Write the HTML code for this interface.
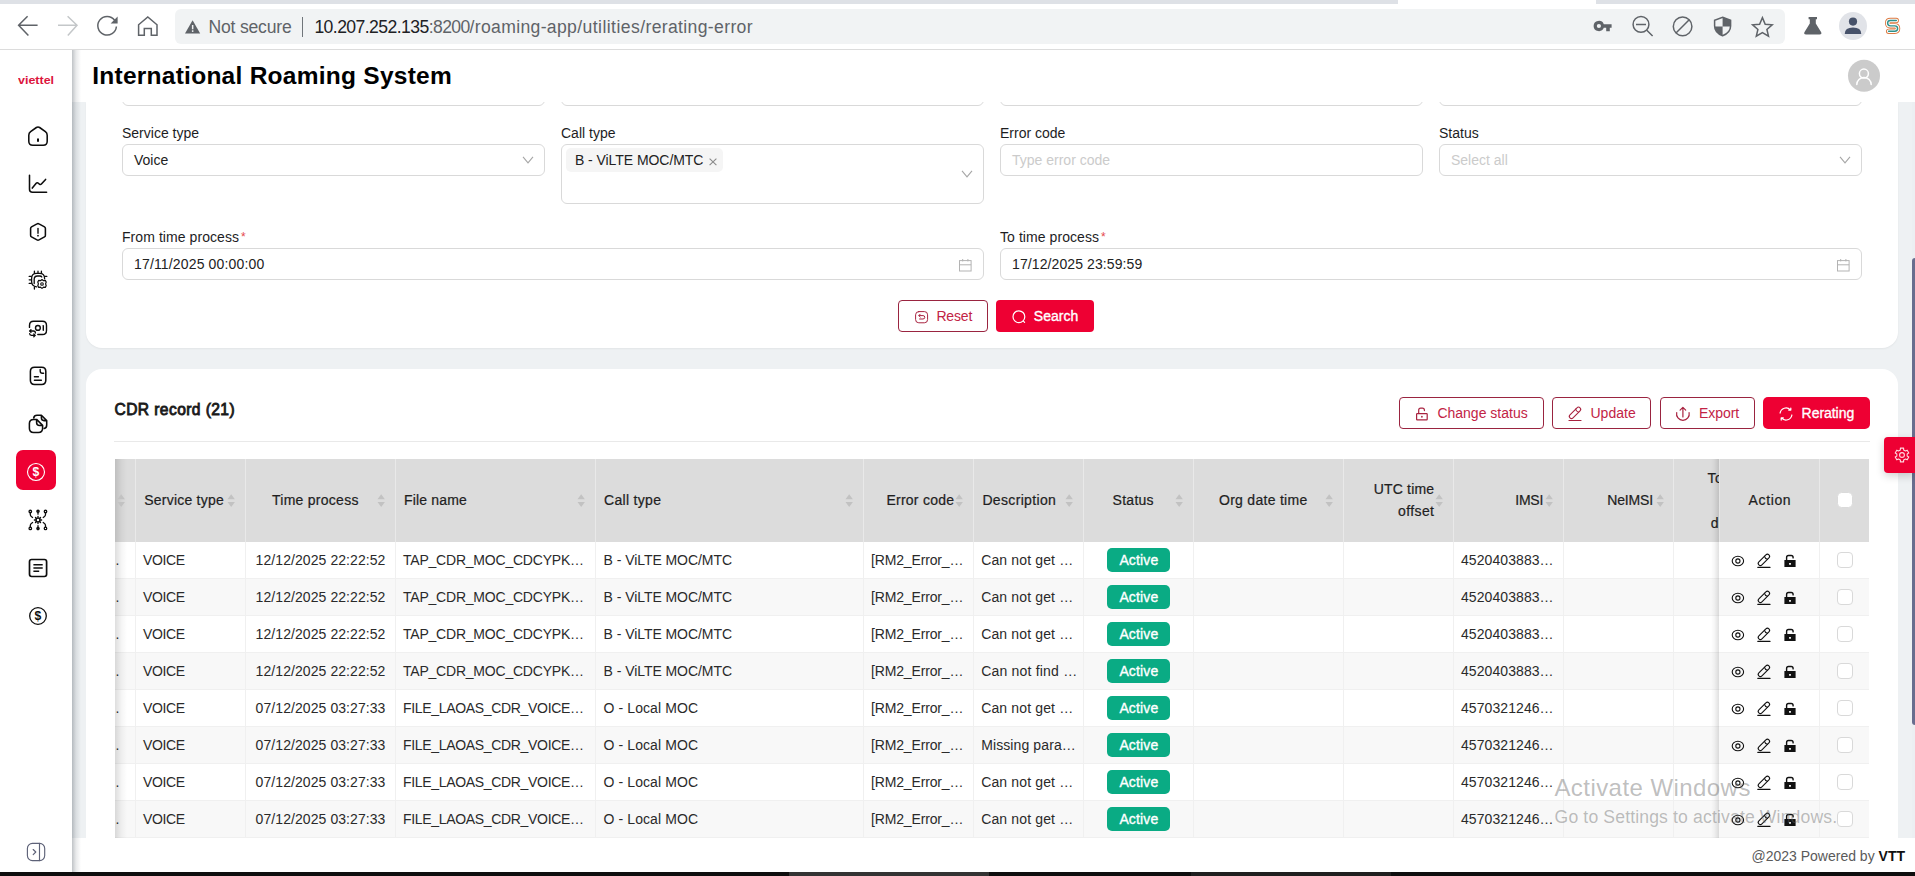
<!DOCTYPE html>
<html lang="en"><head><meta charset="utf-8"><title>International Roaming System</title>
<style>
html,body{margin:0;padding:0;}
body{width:1915px;height:876px;overflow:hidden;position:relative;background:#fff;font-family:"Liberation Sans",Arial,sans-serif;}
div,svg{box-sizing:border-box;}
svg{position:absolute;overflow:visible;}
.inp{position:absolute;border:1px solid #d9d9d9;border-radius:6px;background:#fff;}
</style></head><body>
<div style="position:absolute;left:72px;top:102px;width:1843px;height:736px;background:#eef1f3;"></div>
<div style="position:absolute;left:86px;top:102px;width:1812px;height:246px;background:#fff;border-radius:0 0 16px 16px;box-shadow:0 1px 2px rgba(0,0,0,.05);"></div>
<div style="position:absolute;left:86px;top:369px;width:1812px;height:481px;background:#fff;border-radius:16px 16px 0 0;"></div>
<div style="position:absolute;left:72px;top:838px;width:1843px;height:34px;background:#fff;"></div>
<div style="position:absolute;left:72px;top:50px;width:1843px;height:52px;background:#fff;"></div>
<div style="position:absolute;left:0px;top:50px;width:72px;height:822px;background:#fff;"></div>
<div style="position:absolute;left:72px;top:50px;width:9px;height:822px;background:linear-gradient(90deg,rgba(70,80,90,.34),rgba(70,80,90,.12) 45%,rgba(70,80,90,0));"></div>
<div style="position:absolute;left:0px;top:871.6px;width:1915px;height:4.4px;background:#0e0e0e;"></div>
<div style="position:absolute;left:789px;top:872px;width:200px;height:4px;background:#333;"></div>
<div style="position:absolute;left:1191px;top:872px;width:200px;height:4px;background:#1f1f1f;"></div>
<div style="position:absolute;left:0px;top:0px;width:1915px;height:50px;background:#fff;border-bottom:1px solid #dcdcdc;"></div>
<div style="position:absolute;left:0px;top:0px;width:1915px;height:4px;background:#dee1e6;"></div>
<div style="position:absolute;left:1398px;top:0px;width:198px;height:4px;background:#fff;"></div>
<div style="position:absolute;left:175px;top:9px;width:1610px;height:35px;background:#f1f3f4;border-radius:6px;"></div>
<div style="position:absolute;left:208.4px;top:18.80px;font-size:17.6px;line-height:17.6px;color:#5f6368;white-space:pre;letter-spacing:-0.189px;">Not secure</div>
<div style="position:absolute;left:301.5px;top:17px;width:1.2px;height:19.5px;background:#70757a;"></div>
<div style="position:absolute;left:314.4px;top:18.80px;font-size:17.6px;line-height:17.6px;color:#202124;white-space:pre;letter-spacing:-0.567px;">10.207.252.135</div>
<div style="position:absolute;left:428.8px;top:18.80px;font-size:17.6px;line-height:17.6px;color:#5f6368;white-space:pre;letter-spacing:-0.649px;">:8200</div>
<div style="position:absolute;left:469.6px;top:18.80px;font-size:17.6px;line-height:17.6px;color:#5f6368;white-space:pre;letter-spacing:0.325px;">/roaming-app</div>
<div style="position:absolute;left:577.2px;top:18.80px;font-size:17.6px;line-height:17.6px;color:#5f6368;white-space:pre;letter-spacing:0.431px;">/utilities</div>
<div style="position:absolute;left:640.2px;top:18.80px;font-size:17.6px;line-height:17.6px;color:#5f6368;white-space:pre;letter-spacing:0.348px;">/rerating-error</div>
<div style="position:absolute;left:92.2px;top:64.26px;font-size:24.5px;line-height:24.5px;color:#000;white-space:pre;font-weight:700;letter-spacing:0.259px;">International Roaming System</div>
<div style="position:absolute;right:10px;top:849.15px;font-size:14px;line-height:14px;color:#5a5a5a;white-space:pre;">@2023 Powered by <b style="color:#111">VTT</b></div>
<svg style="left:0px;top:0px;" width="170" height="50" viewBox="0 0 170 50">
<g fill="none" stroke="#5f6368" stroke-width="1.5" stroke-linecap="butt" stroke-linejoin="miter">
<path d="M37.6 25.2H19M27.6 16.3L18.6 25.2L28.4 35.6"/>
<path d="M58 25.2H76.6M67.6 16.3L77 25.2L67.8 35.6" stroke="#c4c7c9"/>
<path d="M114.6 20.2A9.3 9.3 0 1 0 116.4 26.5"/>
<path d="M138.6 35.2V24.8L147.8 16.9L157 24.8V35.2H151.3V28.6H144.3V35.2Z"/>
</g>
<path d="M117.6 16.6V23.6H110.6Z" fill="#5f6368"/>
</svg>
<svg style="left:184px;top:19px;" width="18" height="16" viewBox="0 0 18 16"><path d="M8.6 1.2L16.2 14.6H1Z" fill="#5f6368"/><rect x="7.9" y="6" width="1.5" height="4.3" fill="#f1f3f4"/><rect x="7.9" y="11.3" width="1.5" height="1.6" fill="#f1f3f4"/></svg>
<svg style="left:0px;top:0px;" width="1915" height="50" viewBox="0 0 1915 50">
<g fill="#5f6368">
<!-- key -->
<path fill-rule="evenodd" d="M1593.6 26a5.3 5.3 0 0 1 10.2 -1.8H1611.6V27.8H1609.8V31.2H1606.2V27.8H1603.8A5.3 5.3 0 0 1 1593.6 26ZM1596.8 26a2.1 2.1 0 1 0 4.2 0a2.1 2.1 0 1 0 -4.2 0Z"/>
<!-- flask -->
<path d="M1808.6 17H1817V19.2H1815.8V23.6L1821.2 32.2Q1822 34.4 1819.6 34.4H1806Q1803.6 34.4 1804.4 32.2L1809.8 23.6V19.2H1808.6Z"/>
</g>
<g fill="none" stroke="#5f6368" stroke-width="1.5">
<!-- zoom out -->
<circle cx="1641" cy="24.4" r="7.9"/><path d="M1636 24.4H1646M1646.8 30.2L1652.6 36" />
<!-- blocked -->
<circle cx="1682.6" cy="26.4" r="9.3"/><path d="M1676 33L1689.2 19.8"/>
<!-- shield -->
<path d="M1722.6 17.2L1730.6 20.2V26Q1730.6 32.6 1722.6 35.8Q1714.6 32.6 1714.6 26V20.2Z"/>
<!-- star -->
<path d="M1762.4 17.6L1765.2 24.2L1772.2 24.8L1766.9 29.4L1768.5 36.2L1762.4 32.6L1756.3 36.2L1757.9 29.4L1752.6 24.8L1759.6 24.2Z" stroke-linejoin="miter"/>
</g>
<path d="M1722.6 17.2L1730.6 20.2V26.4H1722.6ZM1722.6 26.4V35.8Q1715.2 32.8 1714.7 26.4Z" fill="#5f6368"/>
<!-- avatar -->
<circle cx="1853" cy="26" r="14" fill="#e1e3e8"/>
<circle cx="1853" cy="21.6" r="4.1" fill="#47526a"/>
<path d="M1844.8 33.4Q1844.8 27.4 1853 27.4Q1861.2 27.4 1861.2 33.4V34H1844.8Z" fill="#47526a"/>
<!-- S logo -->
<g fill="none" stroke-linecap="round" stroke-linejoin="round">
<path id="slogo" d="M1896.3 20.4H1890.4Q1887.6 20.4 1887.6 23.1Q1887.6 25.85 1890.4 25.85H1894.8Q1897.6 25.85 1897.6 28.6Q1897.6 31.3 1894.8 31.3H1888.6" stroke="#dd7a42" stroke-width="5.3"/>
<path d="M1896.3 20.4H1890.4Q1887.6 20.4 1887.6 23.1Q1887.6 25.85 1890.4 25.85H1894.8Q1897.6 25.85 1897.6 28.6Q1897.6 31.3 1894.8 31.3H1888.6" stroke="#fff" stroke-width="3.5"/>
<path d="M1896.3 20.4H1890.4Q1887.6 20.4 1887.6 23.1Q1887.6 25.85 1890.4 25.85H1894.8Q1897.6 25.85 1897.6 28.6Q1897.6 31.3 1894.8 31.3H1888.6" stroke="#2f908a" stroke-width="1.45"/>
</g>
</svg>
<div style="position:absolute;left:18px;top:74.69px;font-size:11px;line-height:11px;color:#dc143c;white-space:pre;font-weight:700;transform:scaleX(1.135);transform-origin:0 0;">viettel</div>
<div style="position:absolute;left:16px;top:450px;width:40px;height:40px;background:#ee0033;border-radius:7px;"></div>
<svg style="left:0px;top:100px;" width="72" height="776" viewBox="0 100 72 776">
<g fill="none" stroke="#0d0d0d" stroke-width="1.55" stroke-linecap="round" stroke-linejoin="round">
<!-- home -->
<path d="M36.4 127.5Q38 126.4 39.6 127.5L45.4 131.7Q47.2 133 47.2 135.2V141.2Q47.2 145.2 43.2 145.2H32.8Q28.8 145.2 28.8 141.2V135.2Q28.8 133 30.6 131.7Z"/>
<path d="M38 138.6V141.8" stroke-width="2" stroke-linecap="butt"/>
<!-- chart -->
<path d="M29.5 175.2V189.3Q29.5 192.3 32.5 192.3H46.6M32.3 188.1L36.2 183.2Q37 182.3 38 183L39.7 184.3Q40.6 184.9 41.4 184L45.6 179.4"/>
<!-- hex alert -->
<path d="M37 223.9Q38 223.3 39 223.9L44.5 226.9Q45.4 227.4 45.4 228.6V235.2Q45.4 236.4 44.5 236.9L39 239.9Q38 240.5 37 239.9L31.5 236.9Q30.6 236.4 30.6 235.2V228.6Q30.6 227.4 31.5 226.9Z"/>
<path d="M38 228.4V233.3" stroke-width="1.4"/><path d="M38 235.6V235.7" stroke-width="1.7"/>
<!-- doc -->
<path d="M34.6 367.3H41.6Q45.8 367.3 45.8 371.5V380.2Q45.8 384.4 41.6 384.4H34.6Q30.4 384.4 30.4 380.2V371.5Q30.4 367.3 34.6 367.3Z"/>
<path d="M40.2 369.4V371Q40.2 373.2 42.4 373.2H43.6M34.4 376.7H38.4M34.4 380.2H41.4" stroke-width="1.4"/>
<!-- stickers -->
<path d="M36.6 419.4H33.6Q29.4 419.4 29.4 423.6V428.2Q29.4 432.4 33.6 432.4H38.4Q42.6 432.4 42.6 428.2V425.4ZM36.6 419.4V422.4Q36.6 425.4 39.6 425.4H42.6"/>
<path d="M33.7 418Q34.2 415.3 37 415.3H41.4L46.7 420.6V425Q46.7 428 44.2 428.5M41.4 415.3V417.8Q41.4 420.6 44 420.6H46.7"/>
<!-- list -->
<rect x="29.5" y="559.5" width="17.1" height="17" rx="2.2" stroke-width="1.7"/>
<path d="M33.4 564.7H42.7M33.4 568H42.7M33.4 571.3H39.2" stroke-width="1.6" stroke-linecap="butt"/>
<!-- dollar -->
<circle cx="38" cy="616" r="8.3" stroke-width="1.3"/>
</g>
<!-- cpu setting -->
<g fill="none" stroke="#0d0d0d" stroke-width="1.3" stroke-linecap="round" stroke-linejoin="round">
<path d="M36.6 286.9Q31.6 286.2 31.6 281.6V278.4Q31.6 273.4 36.6 273.4H39.6Q44.6 273.4 44.6 278.4V278.8"/>
<path d="M34.2 283.6V279.2Q34.2 276 37.4 276H39.6Q41.4 276 41.8 277"/>
<path d="M34.4 271.2V273M38 271.2V273M41.4 271.2V273M29.2 276.4H31.2M29.2 279.8H31.2M29.2 283.4H31.2M45 276.4H46.8M34.4 287.2V289"/>
<path d="M42 279.6L43.5 280.7L45.3 280.4L46.2 282L45.6 283.9L46.2 285.8L45.3 287.4L43.5 287.2L42 288.4L40.5 287.2L38.7 287.4L37.8 285.8L38.4 283.9L37.8 282L38.7 280.4L40.5 280.7Z" stroke-width="1.2"/>
<circle cx="42" cy="284" r="1.3" stroke-width="1.1"/>
</g>
<!-- money change -->
<g fill="none" stroke="#0d0d0d" stroke-width="1.4" stroke-linecap="round" stroke-linejoin="round">
<path d="M29.5 327.4V325.4Q29.5 321.3 33.6 321.3H42.4Q46.5 321.3 46.5 325.4V330.4Q46.5 334.5 42.4 334.5H37.8"/>
<circle cx="37.9" cy="327.9" r="2.4"/>
<path d="M43.3 325.6V330.2"/>
<path d="M29.6 331H33.4Q35.4 331 35.4 333M31 329.6L29.6 331L31 332.4M35.2 335.4H31.4Q29.6 335.4 29.6 333.6M33.8 334L35.2 335.4L33.8 336.8" stroke-width="1.3"/>
</g>
<!-- network gear -->
<g fill="none" stroke="#0d0d0d" stroke-width="1.3" stroke-linecap="round" stroke-linejoin="round">
<circle cx="30.3" cy="511.5" r="1.25"/><circle cx="45.5" cy="511.5" r="1.25"/><circle cx="30.3" cy="528.4" r="1.25"/><circle cx="45.5" cy="528.4" r="1.25"/>
<circle cx="38" cy="511.2" r="1" stroke-width="1.6"/><circle cx="38" cy="528.6" r="1" stroke-width="1.6"/>
<path d="M30.3 513V514.6Q30.3 516 31.6 516.8L32.6 517.5M45.5 513V514.6Q45.5 516 44.2 516.8L43.2 517.5M30.3 526.9V525.4Q30.3 524 31.6 523.2L32.6 522.5M45.5 526.9V525.4Q45.5 524 44.2 523.2L43.2 522.5M38 512.6V514.2M38 527.2V525.6"/>
<circle cx="38" cy="520" r="2" stroke-width="1.6"/>
<path d="M38 516.4V517M38 523V523.6M34.4 520H35M41 520H41.6M35.5 517.5L35.9 517.9M40.1 522.1L40.5 522.5M35.5 522.5L35.9 522.1M40.1 517.9L40.5 517.5" stroke-width="1.4"/>
</g>
<!-- active dollar -->
<circle cx="36" cy="472" r="8.5" fill="none" stroke="#fff" stroke-width="1.1"/>
<text x="36" y="476.4" font-family="Liberation Sans, Arial, sans-serif" font-weight="700" font-size="12.2" fill="#fff" text-anchor="middle">$</text>
<text x="38" y="620.4" font-family="Liberation Sans, Arial, sans-serif" font-weight="700" font-size="12.2" fill="#0d0d0d" text-anchor="middle">$</text>
<!-- collapse -->
<g fill="none" stroke="#5e6278" stroke-width="1.15" stroke-linecap="round" stroke-linejoin="round">
<rect x="27.4" y="843.4" width="17.3" height="17.2" rx="5"/>
<path d="M39.5 843.4V860.6M33.2 849.5L35.8 852L33.2 854.6"/>
</g>
</svg>
<div style="position:absolute;left:122px;top:102px;width:423px;height:4px;overflow:hidden"><div class="inp" style="left:0;top:-28px;width:423px;height:32px"></div></div>
<div style="position:absolute;left:561px;top:102px;width:423px;height:4px;overflow:hidden"><div class="inp" style="left:0;top:-28px;width:423px;height:32px"></div></div>
<div style="position:absolute;left:1000px;top:102px;width:423px;height:4px;overflow:hidden"><div class="inp" style="left:0;top:-28px;width:423px;height:32px"></div></div>
<div style="position:absolute;left:1439px;top:102px;width:423px;height:4px;overflow:hidden"><div class="inp" style="left:0;top:-28px;width:423px;height:32px"></div></div>
<div style="position:absolute;left:122px;top:125.75px;font-size:14px;line-height:14px;color:#1d1d1f;white-space:pre;">Service type</div>
<div style="position:absolute;left:561px;top:125.75px;font-size:14px;line-height:14px;color:#1d1d1f;white-space:pre;">Call type</div>
<div style="position:absolute;left:1000px;top:125.75px;font-size:14px;line-height:14px;color:#1d1d1f;white-space:pre;">Error code</div>
<div style="position:absolute;left:1439px;top:125.75px;font-size:14px;line-height:14px;color:#1d1d1f;white-space:pre;">Status</div>
<div class="inp" style="left:122px;top:144px;width:423px;height:32px"></div>
<div class="inp" style="left:561px;top:144px;width:423px;height:60px"></div>
<div class="inp" style="left:1000px;top:144px;width:423px;height:32px"></div>
<div class="inp" style="left:1439px;top:144px;width:423px;height:32px"></div>
<div style="position:absolute;left:134px;top:152.95px;font-size:14px;line-height:14px;color:#222;white-space:pre;">Voice</div>
<div style="position:absolute;left:1012px;top:152.95px;font-size:14px;line-height:14px;color:#cbcbcb;white-space:pre;">Type error code</div>
<div style="position:absolute;left:1451px;top:152.95px;font-size:14px;line-height:14px;color:#cbcbcb;white-space:pre;">Select all</div>
<svg style="left:522px;top:155.6px;" width="12" height="8" viewBox="0 0 12 8"><path d="M1 0.8L6 6.8L11 0.8" fill="none" stroke="#a6a6a6" stroke-width="1.1"/></svg>
<svg style="left:961px;top:169.6px;" width="12" height="8" viewBox="0 0 12 8"><path d="M1 0.8L6 6.8L11 0.8" fill="none" stroke="#a6a6a6" stroke-width="1.1"/></svg>
<svg style="left:1839px;top:155.6px;" width="12" height="8" viewBox="0 0 12 8"><path d="M1 0.8L6 6.8L11 0.8" fill="none" stroke="#a6a6a6" stroke-width="1.1"/></svg>
<div style="position:absolute;left:566px;top:148px;width:157px;height:24px;background:#f5f5f5;border-radius:5px;"></div>
<div style="position:absolute;left:575px;top:152.65px;font-size:14px;line-height:14px;color:#222;white-space:pre;letter-spacing:-0.06px;">B - ViLTE MOC/MTC</div>
<svg style="left:709px;top:157.6px;" width="8" height="8" viewBox="0 0 8 8"><path d="M0.6 0.6L7.4 7.2M7.4 0.6L0.6 7.2" fill="none" stroke="#8a8a8a" stroke-width="1.1"/></svg>
<div style="position:absolute;left:122px;top:229.85px;font-size:14px;line-height:14px;color:#1d1d1f;white-space:pre;letter-spacing:0.07px;">From time process<span style="color:#e5484d;font-size:12px;position:relative;top:-1px;left:2px">*</span></div>
<div style="position:absolute;left:1000px;top:229.85px;font-size:14px;line-height:14px;color:#1d1d1f;white-space:pre;letter-spacing:0.07px;">To time process<span style="color:#e5484d;font-size:12px;position:relative;top:-1px;left:2px">*</span></div>
<div class="inp" style="left:122px;top:248px;width:862px;height:32px"></div>
<div class="inp" style="left:1000px;top:248px;width:862px;height:32px"></div>
<div style="position:absolute;left:134px;top:256.95px;font-size:14px;line-height:14px;color:#222;white-space:pre;letter-spacing:0.155px;">17/11/2025 00:00:00</div>
<div style="position:absolute;left:1012px;top:256.95px;font-size:14px;line-height:14px;color:#222;white-space:pre;letter-spacing:0.097px;">17/12/2025 23:59:59</div>
<svg style="left:958.6px;top:258.9px;" width="13" height="13" viewBox="0 0 13 13"><g fill="none" stroke="#b3b3b3" stroke-width="1"><rect x="0.5" y="1.6" width="11.6" height="10.4"/><path d="M0.5 5.8H12.1M3.7 0V2.4M8.9 0V2.4"/></g></svg>
<svg style="left:1836.6px;top:258.9px;" width="13" height="13" viewBox="0 0 13 13"><g fill="none" stroke="#b3b3b3" stroke-width="1"><rect x="0.5" y="1.6" width="11.6" height="10.4"/><path d="M0.5 5.8H12.1M3.7 0V2.4M8.9 0V2.4"/></g></svg>
<div style="position:absolute;left:898px;top:300px;width:90px;height:32px;border:1px solid #9a2440;border-radius:4px;background:#fff;"></div>
<svg style="left:914.6px;top:310.6px;" width="13.2" height="12.4" viewBox="0 0 13.2 12.4"><g fill="none" stroke="#a8223f" stroke-width="1" stroke-linecap="round" stroke-linejoin="round"><rect x="0.6" y="0.6" width="12" height="11.2" rx="3.2"/><path d="M4 4.6H8Q9.8 4.6 9.8 6.3Q9.8 8 8 8H4.6M5.2 3.2L3.8 4.6L5.2 6"/></g></svg>
<div style="position:absolute;left:936.4px;top:308.85px;font-size:14px;line-height:14px;color:#c22345;white-space:pre;letter-spacing:-0.143px;">Reset</div>
<div style="position:absolute;left:996px;top:300px;width:98px;height:32px;background:#ee0033;border-radius:4px;"></div>
<svg style="left:1012px;top:309.6px;" width="14" height="14" viewBox="0 0 14 14"><g fill="none" stroke="#fff" stroke-width="1.2" stroke-linecap="round"><circle cx="6.9" cy="6.7" r="5.9"/><path d="M11.4 11.2L12.6 12.4"/></g></svg>
<div style="position:absolute;left:1033.8px;top:308.85px;font-size:14px;line-height:14px;color:#fff;white-space:pre;letter-spacing:0.008px;-webkit-text-stroke:0.35px #fff;">Search</div>
<div style="position:absolute;left:114.5px;top:401.99px;font-size:15.6px;line-height:15.6px;color:#1a1a1a;white-space:pre;letter-spacing:0.412px;-webkit-text-stroke:0.85px #1a1a1a;">CDR record (21)</div>
<div style="position:absolute;left:114px;top:441px;width:1756px;height:1px;background:#e9e9e9;"></div>
<div style="position:absolute;left:1399px;top:397px;width:145px;height:32px;border:1px solid #9a2440;border-radius:4px;background:#fff;"></div>
<div style="position:absolute;left:1552px;top:397px;width:99px;height:32px;border:1px solid #9a2440;border-radius:4px;background:#fff;"></div>
<div style="position:absolute;left:1660px;top:397px;width:95px;height:32px;border:1px solid #9a2440;border-radius:4px;background:#fff;"></div>
<div style="position:absolute;left:1763px;top:397px;width:107px;height:32px;background:#ee0033;border-radius:5px;"></div>
<div style="position:absolute;left:1437.4px;top:405.95px;font-size:14px;line-height:14px;color:#c22345;white-space:pre;letter-spacing:0.001px;">Change status</div>
<div style="position:absolute;left:1590.4px;top:405.95px;font-size:14px;line-height:14px;color:#c22345;white-space:pre;letter-spacing:0.051px;">Update</div>
<div style="position:absolute;left:1699px;top:405.95px;font-size:14px;line-height:14px;color:#c22345;white-space:pre;letter-spacing:-0.052px;">Export</div>
<div style="position:absolute;left:1801.6px;top:405.95px;font-size:14px;line-height:14px;color:#fff;white-space:pre;letter-spacing:-0.045px;-webkit-text-stroke:0.35px #fff;">Rerating</div>
<svg style="left:1380px;top:397px;" width="500" height="32" viewBox="1380 397 500 32">
<g fill="none" stroke="#a8223f" stroke-width="1.2" stroke-linecap="round" stroke-linejoin="round">
<!-- unlock -->
<rect x="1416.6" y="413.7" width="10.6" height="6.1" rx="0.6"/>
<path d="M1418.7 413.4V410.2Q1418.7 408.2 1420.7 408.2H1422.4Q1424.4 408.2 1424.4 410.2V410.6"/>
<path d="M1421.9 416.6V416.9" stroke-width="1.6"/>
<!-- pencil -->
<path d="M1569 420.5H1581"/>
<g transform="translate(1575 412.8) rotate(-45)" stroke-width="1.1"><rect x="-7.1" y="-2.15" width="14.2" height="4.3" rx="2.15"/><path d="M3 -2.15Q1.7 0 3 2.15"/></g>
<!-- export -->
<path d="M1676.7 412.6A6.35 6.35 0 1 0 1689.1 412.6M1682.9 417V407.6M1680.1 410.2L1682.9 407.4L1685.7 410.2"/>
</g>
<g fill="none" stroke="#fff" stroke-width="1.25" stroke-linecap="round" stroke-linejoin="round">
<path d="M1780.1 413A6 6 0 0 1 1790.4 409.9M1791.9 415A6 6 0 0 1 1781.6 418.1M1790.8 408V410.1H1788.7M1781.2 420V417.9H1783.3"/>
</g>
</svg>
<div style="position:absolute;left:115px;top:458px;width:1754px;height:380px;overflow:hidden">
<div style="position:absolute;left:0px;top:0.8px;width:1754px;height:83.2px;background:#dcdcdc;"></div>
<div style="position:absolute;left:0px;top:84px;width:1754px;height:37px;background:#fff;border-bottom:1px solid #f0f0f0;"></div>
<div style="position:absolute;left:0px;top:121px;width:1754px;height:37px;background:#f8f8f8;border-bottom:1px solid #f0f0f0;"></div>
<div style="position:absolute;left:0px;top:158px;width:1754px;height:37px;background:#fff;border-bottom:1px solid #f0f0f0;"></div>
<div style="position:absolute;left:0px;top:195px;width:1754px;height:37px;background:#f8f8f8;border-bottom:1px solid #f0f0f0;"></div>
<div style="position:absolute;left:0px;top:232px;width:1754px;height:37px;background:#fff;border-bottom:1px solid #f0f0f0;"></div>
<div style="position:absolute;left:0px;top:269px;width:1754px;height:37px;background:#f8f8f8;border-bottom:1px solid #f0f0f0;"></div>
<div style="position:absolute;left:0px;top:306px;width:1754px;height:37px;background:#fff;border-bottom:1px solid #f0f0f0;"></div>
<div style="position:absolute;left:0px;top:343px;width:1754px;height:37px;background:#f8f8f8;border-bottom:1px solid #f0f0f0;"></div>
<div style="position:absolute;left:20px;top:0.8px;width:1px;height:83.2px;background:#e9e9e9;"></div>
<div style="position:absolute;left:20px;top:84px;width:1px;height:296px;background:#f0f0f0;"></div>
<div style="position:absolute;left:130px;top:0.8px;width:1px;height:83.2px;background:#e9e9e9;"></div>
<div style="position:absolute;left:130px;top:84px;width:1px;height:296px;background:#f0f0f0;"></div>
<div style="position:absolute;left:280px;top:0.8px;width:1px;height:83.2px;background:#e9e9e9;"></div>
<div style="position:absolute;left:280px;top:84px;width:1px;height:296px;background:#f0f0f0;"></div>
<div style="position:absolute;left:480px;top:0.8px;width:1px;height:83.2px;background:#e9e9e9;"></div>
<div style="position:absolute;left:480px;top:84px;width:1px;height:296px;background:#f0f0f0;"></div>
<div style="position:absolute;left:748px;top:0.8px;width:1px;height:83.2px;background:#e9e9e9;"></div>
<div style="position:absolute;left:748px;top:84px;width:1px;height:296px;background:#f0f0f0;"></div>
<div style="position:absolute;left:858px;top:0.8px;width:1px;height:83.2px;background:#e9e9e9;"></div>
<div style="position:absolute;left:858px;top:84px;width:1px;height:296px;background:#f0f0f0;"></div>
<div style="position:absolute;left:968px;top:0.8px;width:1px;height:83.2px;background:#e9e9e9;"></div>
<div style="position:absolute;left:968px;top:84px;width:1px;height:296px;background:#f0f0f0;"></div>
<div style="position:absolute;left:1078px;top:0.8px;width:1px;height:83.2px;background:#e9e9e9;"></div>
<div style="position:absolute;left:1078px;top:84px;width:1px;height:296px;background:#f0f0f0;"></div>
<div style="position:absolute;left:1228px;top:0.8px;width:1px;height:83.2px;background:#e9e9e9;"></div>
<div style="position:absolute;left:1228px;top:84px;width:1px;height:296px;background:#f0f0f0;"></div>
<div style="position:absolute;left:1338px;top:0.8px;width:1px;height:83.2px;background:#e9e9e9;"></div>
<div style="position:absolute;left:1338px;top:84px;width:1px;height:296px;background:#f0f0f0;"></div>
<div style="position:absolute;left:1448px;top:0.8px;width:1px;height:83.2px;background:#e9e9e9;"></div>
<div style="position:absolute;left:1448px;top:84px;width:1px;height:296px;background:#f0f0f0;"></div>
<div style="position:absolute;left:1558px;top:0.8px;width:1px;height:83.2px;background:#e9e9e9;"></div>
<div style="position:absolute;left:1558px;top:84px;width:1px;height:296px;background:#f0f0f0;"></div>
<div style="position:absolute;left:1668px;top:0.8px;width:1px;height:83.2px;background:#e9e9e9;"></div>
<div style="position:absolute;left:1668px;top:84px;width:1px;height:296px;background:#f0f0f0;"></div>
<div style="position:absolute;left:1704px;top:0.8px;width:1px;height:83.2px;background:#e9e9e9;"></div>
<div style="position:absolute;left:1704px;top:84px;width:1px;height:296px;background:#f0f0f0;"></div>
<div style="position:absolute;left:0px;top:0.8px;width:12px;height:379.2px;background:linear-gradient(90deg,rgba(0,0,0,.13),rgba(0,0,0,.04) 55%,rgba(0,0,0,0));"></div>
<svg style="left:2.0000000000000027px;top:35.59999999999999px;" width="8.4" height="13.2" viewBox="0 0 8.4 13.2"><path d="M4.2 0.3L7.9 5.2H0.5Z M4.2 12.9L7.9 8H0.5Z" fill="#c2c2c2"/></svg>
<div style="position:absolute;left:29.30000000000001px;top:34.95px;font-size:14px;line-height:14px;color:#1f1f1f;white-space:pre;letter-spacing:0.215px;-webkit-text-stroke:0.22px #1f1f1f;">Service type</div>
<svg style="left:112.2px;top:35.59999999999999px;" width="8.4" height="13.2" viewBox="0 0 8.4 13.2"><path d="M4.2 0.3L7.9 5.2H0.5Z M4.2 12.9L7.9 8H0.5Z" fill="#c2c2c2"/></svg>
<div style="position:absolute;left:157px;top:34.95px;font-size:14px;line-height:14px;color:#1f1f1f;white-space:pre;letter-spacing:0.264px;-webkit-text-stroke:0.22px #1f1f1f;">Time process</div>
<svg style="left:262.2px;top:35.59999999999999px;" width="8.4" height="13.2" viewBox="0 0 8.4 13.2"><path d="M4.2 0.3L7.9 5.2H0.5Z M4.2 12.9L7.9 8H0.5Z" fill="#c2c2c2"/></svg>
<div style="position:absolute;left:289px;top:34.95px;font-size:14px;line-height:14px;color:#1f1f1f;white-space:pre;letter-spacing:0.166px;-webkit-text-stroke:0.22px #1f1f1f;">File name</div>
<svg style="left:462.09999999999997px;top:35.59999999999999px;" width="8.4" height="13.2" viewBox="0 0 8.4 13.2"><path d="M4.2 0.3L7.9 5.2H0.5Z M4.2 12.9L7.9 8H0.5Z" fill="#c2c2c2"/></svg>
<div style="position:absolute;left:489px;top:34.95px;font-size:14px;line-height:14px;color:#1f1f1f;white-space:pre;letter-spacing:0.316px;-webkit-text-stroke:0.22px #1f1f1f;">Call type</div>
<svg style="left:730.0999999999999px;top:35.59999999999999px;" width="8.4" height="13.2" viewBox="0 0 8.4 13.2"><path d="M4.2 0.3L7.9 5.2H0.5Z M4.2 12.9L7.9 8H0.5Z" fill="#c2c2c2"/></svg>
<div style="position:absolute;left:771.4px;top:34.95px;font-size:14px;line-height:14px;color:#1f1f1f;white-space:pre;letter-spacing:0.249px;-webkit-text-stroke:0.22px #1f1f1f;">Error code</div>
<svg style="left:840.4px;top:35.59999999999999px;" width="8.4" height="13.2" viewBox="0 0 8.4 13.2"><path d="M4.2 0.3L7.9 5.2H0.5Z M4.2 12.9L7.9 8H0.5Z" fill="#c2c2c2"/></svg>
<div style="position:absolute;left:867.4px;top:34.95px;font-size:14px;line-height:14px;color:#1f1f1f;white-space:pre;letter-spacing:0.337px;-webkit-text-stroke:0.22px #1f1f1f;">Description</div>
<svg style="left:950.0999999999999px;top:35.59999999999999px;" width="8.4" height="13.2" viewBox="0 0 8.4 13.2"><path d="M4.2 0.3L7.9 5.2H0.5Z M4.2 12.9L7.9 8H0.5Z" fill="#c2c2c2"/></svg>
<div style="position:absolute;left:997.5999999999999px;top:34.95px;font-size:14px;line-height:14px;color:#1f1f1f;white-space:pre;letter-spacing:0.262px;-webkit-text-stroke:0.22px #1f1f1f;">Status</div>
<svg style="left:1060.0px;top:35.59999999999999px;" width="8.4" height="13.2" viewBox="0 0 8.4 13.2"><path d="M4.2 0.3L7.9 5.2H0.5Z M4.2 12.9L7.9 8H0.5Z" fill="#c2c2c2"/></svg>
<div style="position:absolute;left:1104px;top:34.95px;font-size:14px;line-height:14px;color:#1f1f1f;white-space:pre;letter-spacing:0.282px;-webkit-text-stroke:0.22px #1f1f1f;">Org date time</div>
<svg style="left:1210.1px;top:35.59999999999999px;" width="8.4" height="13.2" viewBox="0 0 8.4 13.2"><path d="M4.2 0.3L7.9 5.2H0.5Z M4.2 12.9L7.9 8H0.5Z" fill="#c2c2c2"/></svg>
<div style="position:absolute;left:1258.8px;top:24.15px;font-size:14px;line-height:14px;color:#1f1f1f;white-space:pre;letter-spacing:0.156px;-webkit-text-stroke:0.22px #1f1f1f;">UTC time</div>
<div style="position:absolute;left:1283px;top:46.25px;font-size:14px;line-height:14px;color:#1f1f1f;white-space:pre;letter-spacing:0.402px;-webkit-text-stroke:0.22px #1f1f1f;">offset</div>
<svg style="left:1319.8px;top:35.59999999999999px;" width="8.4" height="13.2" viewBox="0 0 8.4 13.2"><path d="M4.2 0.3L7.9 5.2H0.5Z M4.2 12.9L7.9 8H0.5Z" fill="#c2c2c2"/></svg>
<div style="position:absolute;left:1400.2px;top:35.35px;font-size:14px;line-height:14px;color:#1f1f1f;white-space:pre;letter-spacing:-0.193px;-webkit-text-stroke:0.22px #1f1f1f;">IMSI</div>
<svg style="left:1430.3px;top:35.59999999999999px;" width="8.4" height="13.2" viewBox="0 0 8.4 13.2"><path d="M4.2 0.3L7.9 5.2H0.5Z M4.2 12.9L7.9 8H0.5Z" fill="#c2c2c2"/></svg>
<div style="position:absolute;left:1492.2px;top:35.35px;font-size:14px;line-height:14px;color:#1f1f1f;white-space:pre;letter-spacing:-0.135px;-webkit-text-stroke:0.22px #1f1f1f;">NeIMSI</div>
<svg style="left:1540.5px;top:35.59999999999999px;" width="8.4" height="13.2" viewBox="0 0 8.4 13.2"><path d="M4.2 0.3L7.9 5.2H0.5Z M4.2 12.9L7.9 8H0.5Z" fill="#c2c2c2"/></svg>
<div style="position:absolute;left:1592.4px;top:12.95px;font-size:14px;line-height:14px;color:#1f1f1f;white-space:pre;letter-spacing:0.615px;-webkit-text-stroke:0.22px #1f1f1f;">Total call</div>
<div style="position:absolute;left:1615px;top:35.35px;font-size:14px;line-height:14px;color:#1f1f1f;white-space:pre;letter-spacing:0.688px;-webkit-text-stroke:0.22px #1f1f1f;">event</div>
<div style="position:absolute;left:1595.8px;top:57.55px;font-size:14px;line-height:14px;color:#1f1f1f;white-space:pre;letter-spacing:0.487px;-webkit-text-stroke:0.22px #1f1f1f;">duration</div>
<div style="position:absolute;left:0.4000000000000057px;top:94.85px;font-size:14px;line-height:14px;color:#2a2a2a;white-space:pre;">.</div>
<div style="position:absolute;left:28px;top:94.85px;font-size:14px;line-height:14px;color:#2a2a2a;white-space:pre;letter-spacing:-0.391px;">VOICE</div>
<div style="position:absolute;left:140.6px;top:94.85px;font-size:14px;line-height:14px;color:#2a2a2a;white-space:pre;letter-spacing:0.075px;">12/12/2025 22:22:52</div>
<div style="position:absolute;left:288px;top:94.85px;font-size:14px;line-height:14px;color:#2a2a2a;white-space:pre;letter-spacing:-0.216px;">TAP_CDR_MOC_CDCYPK…</div>
<div style="position:absolute;left:488.6px;top:94.85px;font-size:14px;line-height:14px;color:#2a2a2a;white-space:pre;letter-spacing:-0.061px;">B - ViLTE MOC/MTC</div>
<div style="position:absolute;left:756px;top:94.85px;font-size:14px;line-height:14px;color:#2a2a2a;white-space:pre;letter-spacing:-0.157px;">[RM2_Error_…</div>
<div style="position:absolute;left:866.2px;top:94.85px;font-size:14px;line-height:14px;color:#2a2a2a;white-space:pre;letter-spacing:0.144px;">Can not get …</div>
<div style="position:absolute;left:992px;top:90px;width:63px;height:24px;background:#0aab84;border-radius:5px;"></div>
<div style="position:absolute;left:1004.4000000000001px;top:95.15px;font-size:14px;line-height:14px;color:#fff;white-space:pre;letter-spacing:0.135px;-webkit-text-stroke:0.35px #fff;">Active</div>
<div style="position:absolute;left:1346px;top:94.85px;font-size:14px;line-height:14px;color:#2a2a2a;white-space:pre;letter-spacing:0.074px;">4520403883…</div>
<div style="position:absolute;left:0.4000000000000057px;top:131.85px;font-size:14px;line-height:14px;color:#2a2a2a;white-space:pre;">.</div>
<div style="position:absolute;left:28px;top:131.85px;font-size:14px;line-height:14px;color:#2a2a2a;white-space:pre;letter-spacing:-0.391px;">VOICE</div>
<div style="position:absolute;left:140.6px;top:131.85px;font-size:14px;line-height:14px;color:#2a2a2a;white-space:pre;letter-spacing:0.075px;">12/12/2025 22:22:52</div>
<div style="position:absolute;left:288px;top:131.85px;font-size:14px;line-height:14px;color:#2a2a2a;white-space:pre;letter-spacing:-0.216px;">TAP_CDR_MOC_CDCYPK…</div>
<div style="position:absolute;left:488.6px;top:131.85px;font-size:14px;line-height:14px;color:#2a2a2a;white-space:pre;letter-spacing:-0.061px;">B - ViLTE MOC/MTC</div>
<div style="position:absolute;left:756px;top:131.85px;font-size:14px;line-height:14px;color:#2a2a2a;white-space:pre;letter-spacing:-0.157px;">[RM2_Error_…</div>
<div style="position:absolute;left:866.2px;top:131.85px;font-size:14px;line-height:14px;color:#2a2a2a;white-space:pre;letter-spacing:0.144px;">Can not get …</div>
<div style="position:absolute;left:992px;top:127px;width:63px;height:24px;background:#0aab84;border-radius:5px;"></div>
<div style="position:absolute;left:1004.4000000000001px;top:132.15px;font-size:14px;line-height:14px;color:#fff;white-space:pre;letter-spacing:0.135px;-webkit-text-stroke:0.35px #fff;">Active</div>
<div style="position:absolute;left:1346px;top:131.85px;font-size:14px;line-height:14px;color:#2a2a2a;white-space:pre;letter-spacing:0.074px;">4520403883…</div>
<div style="position:absolute;left:0.4000000000000057px;top:168.85px;font-size:14px;line-height:14px;color:#2a2a2a;white-space:pre;">.</div>
<div style="position:absolute;left:28px;top:168.85px;font-size:14px;line-height:14px;color:#2a2a2a;white-space:pre;letter-spacing:-0.391px;">VOICE</div>
<div style="position:absolute;left:140.6px;top:168.85px;font-size:14px;line-height:14px;color:#2a2a2a;white-space:pre;letter-spacing:0.075px;">12/12/2025 22:22:52</div>
<div style="position:absolute;left:288px;top:168.85px;font-size:14px;line-height:14px;color:#2a2a2a;white-space:pre;letter-spacing:-0.216px;">TAP_CDR_MOC_CDCYPK…</div>
<div style="position:absolute;left:488.6px;top:168.85px;font-size:14px;line-height:14px;color:#2a2a2a;white-space:pre;letter-spacing:-0.061px;">B - ViLTE MOC/MTC</div>
<div style="position:absolute;left:756px;top:168.85px;font-size:14px;line-height:14px;color:#2a2a2a;white-space:pre;letter-spacing:-0.157px;">[RM2_Error_…</div>
<div style="position:absolute;left:866.2px;top:168.85px;font-size:14px;line-height:14px;color:#2a2a2a;white-space:pre;letter-spacing:0.144px;">Can not get …</div>
<div style="position:absolute;left:992px;top:164px;width:63px;height:24px;background:#0aab84;border-radius:5px;"></div>
<div style="position:absolute;left:1004.4000000000001px;top:169.15px;font-size:14px;line-height:14px;color:#fff;white-space:pre;letter-spacing:0.135px;-webkit-text-stroke:0.35px #fff;">Active</div>
<div style="position:absolute;left:1346px;top:168.85px;font-size:14px;line-height:14px;color:#2a2a2a;white-space:pre;letter-spacing:0.074px;">4520403883…</div>
<div style="position:absolute;left:0.4000000000000057px;top:205.85px;font-size:14px;line-height:14px;color:#2a2a2a;white-space:pre;">.</div>
<div style="position:absolute;left:28px;top:205.85px;font-size:14px;line-height:14px;color:#2a2a2a;white-space:pre;letter-spacing:-0.391px;">VOICE</div>
<div style="position:absolute;left:140.6px;top:205.85px;font-size:14px;line-height:14px;color:#2a2a2a;white-space:pre;letter-spacing:0.075px;">12/12/2025 22:22:52</div>
<div style="position:absolute;left:288px;top:205.85px;font-size:14px;line-height:14px;color:#2a2a2a;white-space:pre;letter-spacing:-0.216px;">TAP_CDR_MOC_CDCYPK…</div>
<div style="position:absolute;left:488.6px;top:205.85px;font-size:14px;line-height:14px;color:#2a2a2a;white-space:pre;letter-spacing:-0.061px;">B - ViLTE MOC/MTC</div>
<div style="position:absolute;left:756px;top:205.85px;font-size:14px;line-height:14px;color:#2a2a2a;white-space:pre;letter-spacing:-0.157px;">[RM2_Error_…</div>
<div style="position:absolute;left:866.2px;top:205.85px;font-size:14px;line-height:14px;color:#2a2a2a;white-space:pre;letter-spacing:0.201px;">Can not find …</div>
<div style="position:absolute;left:992px;top:201px;width:63px;height:24px;background:#0aab84;border-radius:5px;"></div>
<div style="position:absolute;left:1004.4000000000001px;top:206.15px;font-size:14px;line-height:14px;color:#fff;white-space:pre;letter-spacing:0.135px;-webkit-text-stroke:0.35px #fff;">Active</div>
<div style="position:absolute;left:1346px;top:205.85px;font-size:14px;line-height:14px;color:#2a2a2a;white-space:pre;letter-spacing:0.074px;">4520403883…</div>
<div style="position:absolute;left:0.4000000000000057px;top:242.85px;font-size:14px;line-height:14px;color:#2a2a2a;white-space:pre;">.</div>
<div style="position:absolute;left:28px;top:242.85px;font-size:14px;line-height:14px;color:#2a2a2a;white-space:pre;letter-spacing:-0.391px;">VOICE</div>
<div style="position:absolute;left:140.6px;top:242.85px;font-size:14px;line-height:14px;color:#2a2a2a;white-space:pre;letter-spacing:0.075px;">07/12/2025 03:27:33</div>
<div style="position:absolute;left:288px;top:242.85px;font-size:14px;line-height:14px;color:#2a2a2a;white-space:pre;letter-spacing:-0.326px;">FILE_LAOAS_CDR_VOICE…</div>
<div style="position:absolute;left:488.6px;top:242.85px;font-size:14px;line-height:14px;color:#2a2a2a;white-space:pre;letter-spacing:0.087px;">O - Local MOC</div>
<div style="position:absolute;left:756px;top:242.85px;font-size:14px;line-height:14px;color:#2a2a2a;white-space:pre;letter-spacing:-0.157px;">[RM2_Error_…</div>
<div style="position:absolute;left:866.2px;top:242.85px;font-size:14px;line-height:14px;color:#2a2a2a;white-space:pre;letter-spacing:0.144px;">Can not get …</div>
<div style="position:absolute;left:992px;top:238px;width:63px;height:24px;background:#0aab84;border-radius:5px;"></div>
<div style="position:absolute;left:1004.4000000000001px;top:243.15px;font-size:14px;line-height:14px;color:#fff;white-space:pre;letter-spacing:0.135px;-webkit-text-stroke:0.35px #fff;">Active</div>
<div style="position:absolute;left:1346px;top:242.85px;font-size:14px;line-height:14px;color:#2a2a2a;white-space:pre;letter-spacing:0.074px;">4570321246…</div>
<div style="position:absolute;left:0.4000000000000057px;top:279.85px;font-size:14px;line-height:14px;color:#2a2a2a;white-space:pre;">.</div>
<div style="position:absolute;left:28px;top:279.85px;font-size:14px;line-height:14px;color:#2a2a2a;white-space:pre;letter-spacing:-0.391px;">VOICE</div>
<div style="position:absolute;left:140.6px;top:279.85px;font-size:14px;line-height:14px;color:#2a2a2a;white-space:pre;letter-spacing:0.075px;">07/12/2025 03:27:33</div>
<div style="position:absolute;left:288px;top:279.85px;font-size:14px;line-height:14px;color:#2a2a2a;white-space:pre;letter-spacing:-0.326px;">FILE_LAOAS_CDR_VOICE…</div>
<div style="position:absolute;left:488.6px;top:279.85px;font-size:14px;line-height:14px;color:#2a2a2a;white-space:pre;letter-spacing:0.087px;">O - Local MOC</div>
<div style="position:absolute;left:756px;top:279.85px;font-size:14px;line-height:14px;color:#2a2a2a;white-space:pre;letter-spacing:-0.157px;">[RM2_Error_…</div>
<div style="position:absolute;left:866.2px;top:279.85px;font-size:14px;line-height:14px;color:#2a2a2a;white-space:pre;letter-spacing:0.103px;">Missing para…</div>
<div style="position:absolute;left:992px;top:275px;width:63px;height:24px;background:#0aab84;border-radius:5px;"></div>
<div style="position:absolute;left:1004.4000000000001px;top:280.15px;font-size:14px;line-height:14px;color:#fff;white-space:pre;letter-spacing:0.135px;-webkit-text-stroke:0.35px #fff;">Active</div>
<div style="position:absolute;left:1346px;top:279.85px;font-size:14px;line-height:14px;color:#2a2a2a;white-space:pre;letter-spacing:0.074px;">4570321246…</div>
<div style="position:absolute;left:0.4000000000000057px;top:316.85px;font-size:14px;line-height:14px;color:#2a2a2a;white-space:pre;">.</div>
<div style="position:absolute;left:28px;top:316.85px;font-size:14px;line-height:14px;color:#2a2a2a;white-space:pre;letter-spacing:-0.391px;">VOICE</div>
<div style="position:absolute;left:140.6px;top:316.85px;font-size:14px;line-height:14px;color:#2a2a2a;white-space:pre;letter-spacing:0.075px;">07/12/2025 03:27:33</div>
<div style="position:absolute;left:288px;top:316.85px;font-size:14px;line-height:14px;color:#2a2a2a;white-space:pre;letter-spacing:-0.326px;">FILE_LAOAS_CDR_VOICE…</div>
<div style="position:absolute;left:488.6px;top:316.85px;font-size:14px;line-height:14px;color:#2a2a2a;white-space:pre;letter-spacing:0.087px;">O - Local MOC</div>
<div style="position:absolute;left:756px;top:316.85px;font-size:14px;line-height:14px;color:#2a2a2a;white-space:pre;letter-spacing:-0.157px;">[RM2_Error_…</div>
<div style="position:absolute;left:866.2px;top:316.85px;font-size:14px;line-height:14px;color:#2a2a2a;white-space:pre;letter-spacing:0.144px;">Can not get …</div>
<div style="position:absolute;left:992px;top:312px;width:63px;height:24px;background:#0aab84;border-radius:5px;"></div>
<div style="position:absolute;left:1004.4000000000001px;top:317.15px;font-size:14px;line-height:14px;color:#fff;white-space:pre;letter-spacing:0.135px;-webkit-text-stroke:0.35px #fff;">Active</div>
<div style="position:absolute;left:1346px;top:316.85px;font-size:14px;line-height:14px;color:#2a2a2a;white-space:pre;letter-spacing:0.074px;">4570321246…</div>
<div style="position:absolute;left:0.4000000000000057px;top:353.85px;font-size:14px;line-height:14px;color:#2a2a2a;white-space:pre;">.</div>
<div style="position:absolute;left:28px;top:353.85px;font-size:14px;line-height:14px;color:#2a2a2a;white-space:pre;letter-spacing:-0.391px;">VOICE</div>
<div style="position:absolute;left:140.6px;top:353.85px;font-size:14px;line-height:14px;color:#2a2a2a;white-space:pre;letter-spacing:0.075px;">07/12/2025 03:27:33</div>
<div style="position:absolute;left:288px;top:353.85px;font-size:14px;line-height:14px;color:#2a2a2a;white-space:pre;letter-spacing:-0.326px;">FILE_LAOAS_CDR_VOICE…</div>
<div style="position:absolute;left:488.6px;top:353.85px;font-size:14px;line-height:14px;color:#2a2a2a;white-space:pre;letter-spacing:0.087px;">O - Local MOC</div>
<div style="position:absolute;left:756px;top:353.85px;font-size:14px;line-height:14px;color:#2a2a2a;white-space:pre;letter-spacing:-0.157px;">[RM2_Error_…</div>
<div style="position:absolute;left:866.2px;top:353.85px;font-size:14px;line-height:14px;color:#2a2a2a;white-space:pre;letter-spacing:0.144px;">Can not get …</div>
<div style="position:absolute;left:992px;top:349px;width:63px;height:24px;background:#0aab84;border-radius:5px;"></div>
<div style="position:absolute;left:1004.4000000000001px;top:354.15px;font-size:14px;line-height:14px;color:#fff;white-space:pre;letter-spacing:0.135px;-webkit-text-stroke:0.35px #fff;">Active</div>
<div style="position:absolute;left:1346px;top:353.85px;font-size:14px;line-height:14px;color:#2a2a2a;white-space:pre;letter-spacing:0.074px;">4570321246…</div>
<div style="position:absolute;left:1596px;top:0.8px;width:8px;height:379.2px;background:linear-gradient(270deg,rgba(0,0,0,.12),rgba(0,0,0,.03) 60%,rgba(0,0,0,0));"></div>
<div style="position:absolute;left:1604px;top:0.8px;width:150px;height:83.2px;background:#dcdcdc;"></div>
<div style="position:absolute;left:1604px;top:0.8px;width:1px;height:83.2px;background:#e6e6e6;"></div>
<div style="position:absolute;left:1604px;top:84px;width:150px;height:37px;background:#fff;border-bottom:1px solid #f0f0f0;"></div>
<div style="position:absolute;left:1604px;top:121px;width:150px;height:37px;background:#f8f8f8;border-bottom:1px solid #f0f0f0;"></div>
<div style="position:absolute;left:1604px;top:158px;width:150px;height:37px;background:#fff;border-bottom:1px solid #f0f0f0;"></div>
<div style="position:absolute;left:1604px;top:195px;width:150px;height:37px;background:#f8f8f8;border-bottom:1px solid #f0f0f0;"></div>
<div style="position:absolute;left:1604px;top:232px;width:150px;height:37px;background:#fff;border-bottom:1px solid #f0f0f0;"></div>
<div style="position:absolute;left:1604px;top:269px;width:150px;height:37px;background:#f8f8f8;border-bottom:1px solid #f0f0f0;"></div>
<div style="position:absolute;left:1604px;top:306px;width:150px;height:37px;background:#fff;border-bottom:1px solid #f0f0f0;"></div>
<div style="position:absolute;left:1604px;top:343px;width:150px;height:37px;background:#f8f8f8;border-bottom:1px solid #f0f0f0;"></div>
<div style="position:absolute;left:1704px;top:0.8px;width:1px;height:83.2px;background:#e9e9e9;"></div>
<div style="position:absolute;left:1704px;top:84px;width:1px;height:296px;background:#f0f0f0;"></div>
<div style="position:absolute;left:1753.6px;top:84px;width:1px;height:296px;background:#ececec;"></div>
<div style="position:absolute;left:1633.6px;top:35.35px;font-size:14px;line-height:14px;color:#1f1f1f;white-space:pre;letter-spacing:0.618px;-webkit-text-stroke:0.22px #1f1f1f;">Action</div>
<div style="position:absolute;left:1722px;top:34px;width:16px;height:16px;background:#fff;border:1px solid #dadada;border-radius:4.5px;"></div>
<div style="position:absolute;left:1722px;top:94.29999999999995px;width:16px;height:16px;background:#fff;border:1px solid #d9d9d9;border-radius:4px;"></div>
<div style="position:absolute;left:1722px;top:131.29999999999995px;width:16px;height:16px;background:#fff;border:1px solid #d9d9d9;border-radius:4px;"></div>
<div style="position:absolute;left:1722px;top:168.29999999999995px;width:16px;height:16px;background:#fff;border:1px solid #d9d9d9;border-radius:4px;"></div>
<div style="position:absolute;left:1722px;top:205.29999999999995px;width:16px;height:16px;background:#fff;border:1px solid #d9d9d9;border-radius:4px;"></div>
<div style="position:absolute;left:1722px;top:242.29999999999995px;width:16px;height:16px;background:#fff;border:1px solid #d9d9d9;border-radius:4px;"></div>
<div style="position:absolute;left:1722px;top:279.29999999999995px;width:16px;height:16px;background:#fff;border:1px solid #d9d9d9;border-radius:4px;"></div>
<div style="position:absolute;left:1722px;top:316.29999999999995px;width:16px;height:16px;background:#fff;border:1px solid #d9d9d9;border-radius:4px;"></div>
<div style="position:absolute;left:1722px;top:353.29999999999995px;width:16px;height:16px;background:#fff;border:1px solid #d9d9d9;border-radius:4px;"></div>
<svg style="left:1604px;top:84px;" width="100" height="296" viewBox="1719 542 100 296"><g transform="translate(0 0)">
<g fill="none" stroke="#111" stroke-width="1.1" stroke-linecap="round" stroke-linejoin="round">
<ellipse cx="1737.9" cy="561" rx="5.7" ry="4.8"/><circle cx="1737.9" cy="561" r="2.1"/>
<path d="M1757.8 567.4H1770"/>
<g transform="translate(1763.9 559.9) rotate(-45)"><rect x="-7.1" y="-2.15" width="14.2" height="4.3" rx="2.15"/><path d="M3 -2.15Q1.7 0 3 2.15"/></g>
<path d="M1786.6 560.4V557.4Q1786.6 555.5 1788.5 555.5H1791.2Q1793.1 555.5 1793.1 557.4V557.9" stroke-width="1.4"/>
</g>
<path d="M1784.4 560.1H1795.6V567H1784.4ZM1789.1 562.9V564.7H1790.9V562.9Z" fill="#111" fill-rule="evenodd"/>
</g><g transform="translate(0 37)">
<g fill="none" stroke="#111" stroke-width="1.1" stroke-linecap="round" stroke-linejoin="round">
<ellipse cx="1737.9" cy="561" rx="5.7" ry="4.8"/><circle cx="1737.9" cy="561" r="2.1"/>
<path d="M1757.8 567.4H1770"/>
<g transform="translate(1763.9 559.9) rotate(-45)"><rect x="-7.1" y="-2.15" width="14.2" height="4.3" rx="2.15"/><path d="M3 -2.15Q1.7 0 3 2.15"/></g>
<path d="M1786.6 560.4V557.4Q1786.6 555.5 1788.5 555.5H1791.2Q1793.1 555.5 1793.1 557.4V557.9" stroke-width="1.4"/>
</g>
<path d="M1784.4 560.1H1795.6V567H1784.4ZM1789.1 562.9V564.7H1790.9V562.9Z" fill="#111" fill-rule="evenodd"/>
</g><g transform="translate(0 74)">
<g fill="none" stroke="#111" stroke-width="1.1" stroke-linecap="round" stroke-linejoin="round">
<ellipse cx="1737.9" cy="561" rx="5.7" ry="4.8"/><circle cx="1737.9" cy="561" r="2.1"/>
<path d="M1757.8 567.4H1770"/>
<g transform="translate(1763.9 559.9) rotate(-45)"><rect x="-7.1" y="-2.15" width="14.2" height="4.3" rx="2.15"/><path d="M3 -2.15Q1.7 0 3 2.15"/></g>
<path d="M1786.6 560.4V557.4Q1786.6 555.5 1788.5 555.5H1791.2Q1793.1 555.5 1793.1 557.4V557.9" stroke-width="1.4"/>
</g>
<path d="M1784.4 560.1H1795.6V567H1784.4ZM1789.1 562.9V564.7H1790.9V562.9Z" fill="#111" fill-rule="evenodd"/>
</g><g transform="translate(0 111)">
<g fill="none" stroke="#111" stroke-width="1.1" stroke-linecap="round" stroke-linejoin="round">
<ellipse cx="1737.9" cy="561" rx="5.7" ry="4.8"/><circle cx="1737.9" cy="561" r="2.1"/>
<path d="M1757.8 567.4H1770"/>
<g transform="translate(1763.9 559.9) rotate(-45)"><rect x="-7.1" y="-2.15" width="14.2" height="4.3" rx="2.15"/><path d="M3 -2.15Q1.7 0 3 2.15"/></g>
<path d="M1786.6 560.4V557.4Q1786.6 555.5 1788.5 555.5H1791.2Q1793.1 555.5 1793.1 557.4V557.9" stroke-width="1.4"/>
</g>
<path d="M1784.4 560.1H1795.6V567H1784.4ZM1789.1 562.9V564.7H1790.9V562.9Z" fill="#111" fill-rule="evenodd"/>
</g><g transform="translate(0 148)">
<g fill="none" stroke="#111" stroke-width="1.1" stroke-linecap="round" stroke-linejoin="round">
<ellipse cx="1737.9" cy="561" rx="5.7" ry="4.8"/><circle cx="1737.9" cy="561" r="2.1"/>
<path d="M1757.8 567.4H1770"/>
<g transform="translate(1763.9 559.9) rotate(-45)"><rect x="-7.1" y="-2.15" width="14.2" height="4.3" rx="2.15"/><path d="M3 -2.15Q1.7 0 3 2.15"/></g>
<path d="M1786.6 560.4V557.4Q1786.6 555.5 1788.5 555.5H1791.2Q1793.1 555.5 1793.1 557.4V557.9" stroke-width="1.4"/>
</g>
<path d="M1784.4 560.1H1795.6V567H1784.4ZM1789.1 562.9V564.7H1790.9V562.9Z" fill="#111" fill-rule="evenodd"/>
</g><g transform="translate(0 185)">
<g fill="none" stroke="#111" stroke-width="1.1" stroke-linecap="round" stroke-linejoin="round">
<ellipse cx="1737.9" cy="561" rx="5.7" ry="4.8"/><circle cx="1737.9" cy="561" r="2.1"/>
<path d="M1757.8 567.4H1770"/>
<g transform="translate(1763.9 559.9) rotate(-45)"><rect x="-7.1" y="-2.15" width="14.2" height="4.3" rx="2.15"/><path d="M3 -2.15Q1.7 0 3 2.15"/></g>
<path d="M1786.6 560.4V557.4Q1786.6 555.5 1788.5 555.5H1791.2Q1793.1 555.5 1793.1 557.4V557.9" stroke-width="1.4"/>
</g>
<path d="M1784.4 560.1H1795.6V567H1784.4ZM1789.1 562.9V564.7H1790.9V562.9Z" fill="#111" fill-rule="evenodd"/>
</g><g transform="translate(0 222)">
<g fill="none" stroke="#111" stroke-width="1.1" stroke-linecap="round" stroke-linejoin="round">
<ellipse cx="1737.9" cy="561" rx="5.7" ry="4.8"/><circle cx="1737.9" cy="561" r="2.1"/>
<path d="M1757.8 567.4H1770"/>
<g transform="translate(1763.9 559.9) rotate(-45)"><rect x="-7.1" y="-2.15" width="14.2" height="4.3" rx="2.15"/><path d="M3 -2.15Q1.7 0 3 2.15"/></g>
<path d="M1786.6 560.4V557.4Q1786.6 555.5 1788.5 555.5H1791.2Q1793.1 555.5 1793.1 557.4V557.9" stroke-width="1.4"/>
</g>
<path d="M1784.4 560.1H1795.6V567H1784.4ZM1789.1 562.9V564.7H1790.9V562.9Z" fill="#111" fill-rule="evenodd"/>
</g><g transform="translate(0 259)">
<g fill="none" stroke="#111" stroke-width="1.1" stroke-linecap="round" stroke-linejoin="round">
<ellipse cx="1737.9" cy="561" rx="5.7" ry="4.8"/><circle cx="1737.9" cy="561" r="2.1"/>
<path d="M1757.8 567.4H1770"/>
<g transform="translate(1763.9 559.9) rotate(-45)"><rect x="-7.1" y="-2.15" width="14.2" height="4.3" rx="2.15"/><path d="M3 -2.15Q1.7 0 3 2.15"/></g>
<path d="M1786.6 560.4V557.4Q1786.6 555.5 1788.5 555.5H1791.2Q1793.1 555.5 1793.1 557.4V557.9" stroke-width="1.4"/>
</g>
<path d="M1784.4 560.1H1795.6V567H1784.4ZM1789.1 562.9V564.7H1790.9V562.9Z" fill="#111" fill-rule="evenodd"/>
</g></svg>
</div>
<svg style="left:1848px;top:60px;" width="32" height="32" viewBox="0 0 32 32"><circle cx="16" cy="15.8" r="16" fill="#cbcbcb"/><g fill="none" stroke="#fff" stroke-width="1.5" stroke-linecap="round"><circle cx="15.9" cy="13.6" r="4.5"/><path d="M8.8 24.6A7.2 7.2 0 0 1 23.2 24.6"/></g></svg>
<div style="position:absolute;left:1912px;top:102px;width:3px;height:736px;background:#eceff2;"></div>
<div style="position:absolute;left:1912px;top:258px;width:4px;height:467px;background:#686d8e;border-radius:3px 0 0 3px;"></div>
<div style="position:absolute;left:1884px;top:437px;width:31px;height:36px;background:#ee0033;border-radius:4px 0 0 4px;box-shadow:0 3px 8px rgba(0,0,0,.18);"></div>
<svg style="left:1884px;top:437px;" width="31" height="36" viewBox="1884 437 31 36"><g fill="none" stroke="#ffd9e0" stroke-width="1.1" stroke-linejoin="round"><path d="M1900.40 448.08 L1903.60 448.08 L1903.64 449.96 L1905.55 451.06 L1907.19 450.16 L1908.79 452.92 L1907.18 453.90 L1907.18 456.10 L1908.79 457.08 L1907.19 459.84 L1905.55 458.94 L1903.64 460.04 L1903.60 461.92 L1900.40 461.92 L1900.36 460.04 L1898.45 458.94 L1896.81 459.84 L1895.21 457.08 L1896.82 456.10 L1896.82 453.90 L1895.21 452.92 L1896.81 450.16 L1898.45 451.06 L1900.36 449.96Z"/><circle cx="1902" cy="455" r="2.4"/></g></svg>
<div style="position:absolute;left:1554.4px;top:776.28px;font-size:24px;line-height:24px;color:rgba(100,100,100,.42);white-space:pre;letter-spacing:0.44px;">Activate Windows</div>
<div style="position:absolute;left:1554.6px;top:809.40px;font-size:17.6px;line-height:17.6px;color:rgba(100,100,100,.42);white-space:pre;letter-spacing:0.141px;">Go to Settings to activate Windows.</div>
</body></html>
